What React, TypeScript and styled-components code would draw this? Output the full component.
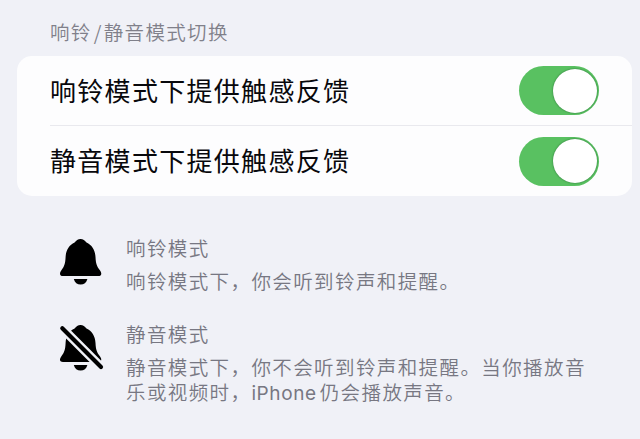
import React from "react";
import styled, { createGlobalStyle } from "styled-components";

const GlobalStyle = createGlobalStyle`
  * { box-sizing: border-box; }
  body {
    margin: 0;
    background: #f0f1f7;
    font-family: "Noto Sans CJK SC", sans-serif;
    overflow: hidden;
  }
`;

const Page = styled.main`
  width: 640px;
  height: 439px;
  padding: 18px 8px 0 17px;
  background: #f0f1f7;
`;

const SectionTitle = styled.h2`
  margin: 0 0 10px;
  padding-left: 33px;
  height: 28px;
  line-height: 28px;
  font-size: 19.5px;
  font-weight: 350;
  letter-spacing: 1.35px;
  color: #80808a;
  white-space: nowrap;
`;

const Slash = styled.span`
  margin: 0 1px 0 2px;
`;

const Card = styled.section`
  height: 140px;
  border-radius: 15px;
  background: #fdfdfe;
  overflow: hidden;
`;

const Row = styled.div<{ $divided?: boolean }>`
  display: flex;
  align-items: center;
  justify-content: space-between;
  height: 70px;
  margin-left: 33px;
  padding-right: 33px;
  border-bottom: ${(p) => (p.$divided ? "1px solid #e9e9ee" : "none")};
`;

const RowLabel = styled.span`
  font-size: 26px;
  line-height: 36px;
  letter-spacing: 1.3px;
  color: #08080c;
  white-space: nowrap;
  padding-bottom: 2px;
`;

const Switch = styled.button`
  display: flex;
  justify-content: flex-end;
  align-items: center;
  width: 80px;
  height: 49px;
  padding: 0 2px;
  border: 0;
  border-radius: 25px;
  background: #59c161;
`;

const Knob = styled.span`
  width: 44px;
  height: 44px;
  border-radius: 50%;
  background: #fff;
  box-shadow: 0 0 2px rgba(20, 80, 35, 0.75);
`;

const Notes = styled.section`
  display: flex;
  flex-direction: column;
  gap: 8px;
  padding: 38px 0 0 40px;
`;

const Note = styled.article`
  display: flex;
  height: 78px;
`;

const NoteIcon = styled.svg`
  flex: none;
  width: 48px;
  height: 52px;
  margin-right: 21px;
`;

const NoteTitle = styled.h3`
  margin: 0 0 7px;
  height: 27px;
  line-height: 27px;
  font-size: 19.5px;
  font-weight: 350;
  letter-spacing: 1.4px;
  color: #777782;
`;

const NoteText = styled.p`
  margin: 0;
  line-height: 25px;
  font-size: 19.5px;
  font-weight: 350;
  letter-spacing: 1.4px;
  color: #777782;
  white-space: nowrap;
`;

const TextLine = styled.span`
  display: block;
`;

const Latin = styled.span`
  font-family: Inter, sans-serif;
  font-size: 19px;
  font-weight: 400;
  letter-spacing: 0.6px;
  margin-right: 3px;
`;

function Bell({ muted = false }: { muted?: boolean }) {
  return (
    <NoteIcon viewBox="0 0 48 52" aria-hidden="true">
      <path
        fill="#000"
        d="M23.5 5C21 5 19 6.5 17.6 8.6C12.2 11 9 16 8.6 23C8.3 29.5 7.4 32.4 4.4 36.3C2.1 39.5 2.7 42 6 42H41.3C44.6 42 45.2 39.5 42.9 36.3C39.8 32.4 38.8 29.5 38.5 23C38.1 16 34.9 11 29.5 8.6C28.1 6.5 26 5 23.5 5Z"
      />
      <path fill="#000" d="M16.8 45H30.4C29.4 48.8 27 50.6 23.6 50.6S17.8 48.8 16.8 45Z" />
      {muted && (
        <g fill="none" strokeLinecap="round">
          <path d="M5.3 8.3L44 47" stroke="#f0f1f7" strokeWidth="9" />
          <path d="M5.3 8.3L44 47" stroke="#000" strokeWidth="4.2" />
        </g>
      )}
    </NoteIcon>
  );
}

function Toggle({ label }: { label: string }) {
  return (
    <Switch type="button" role="switch" aria-checked="true" aria-label={label}>
      <Knob />
    </Switch>
  );
}

export default function App() {
  return (
    <>
      <GlobalStyle />
      <Page>
        <SectionTitle>
          响铃<Slash>/</Slash>静音模式切换
        </SectionTitle>
        <Card>
          <Row $divided>
            <RowLabel>响铃模式下提供触感反馈</RowLabel>
            <Toggle label="响铃模式下提供触感反馈" />
          </Row>
          <Row>
            <RowLabel>静音模式下提供触感反馈</RowLabel>
            <Toggle label="静音模式下提供触感反馈" />
          </Row>
        </Card>
        <Notes>
          <Note>
            <Bell />
            <div>
              <NoteTitle>响铃模式</NoteTitle>
              <NoteText>响铃模式下，你会听到铃声和提醒。</NoteText>
            </div>
          </Note>
          <Note>
            <Bell muted />
            <div>
              <NoteTitle>静音模式</NoteTitle>
              <NoteText>
                <TextLine>静音模式下，你不会听到铃声和提醒。当你播放音</TextLine>
                <TextLine>
                  乐或视频时，<Latin>iPhone</Latin>仍会播放声音。
                </TextLine>
              </NoteText>
            </div>
          </Note>
        </Notes>
      </Page>
    </>
  );
}
